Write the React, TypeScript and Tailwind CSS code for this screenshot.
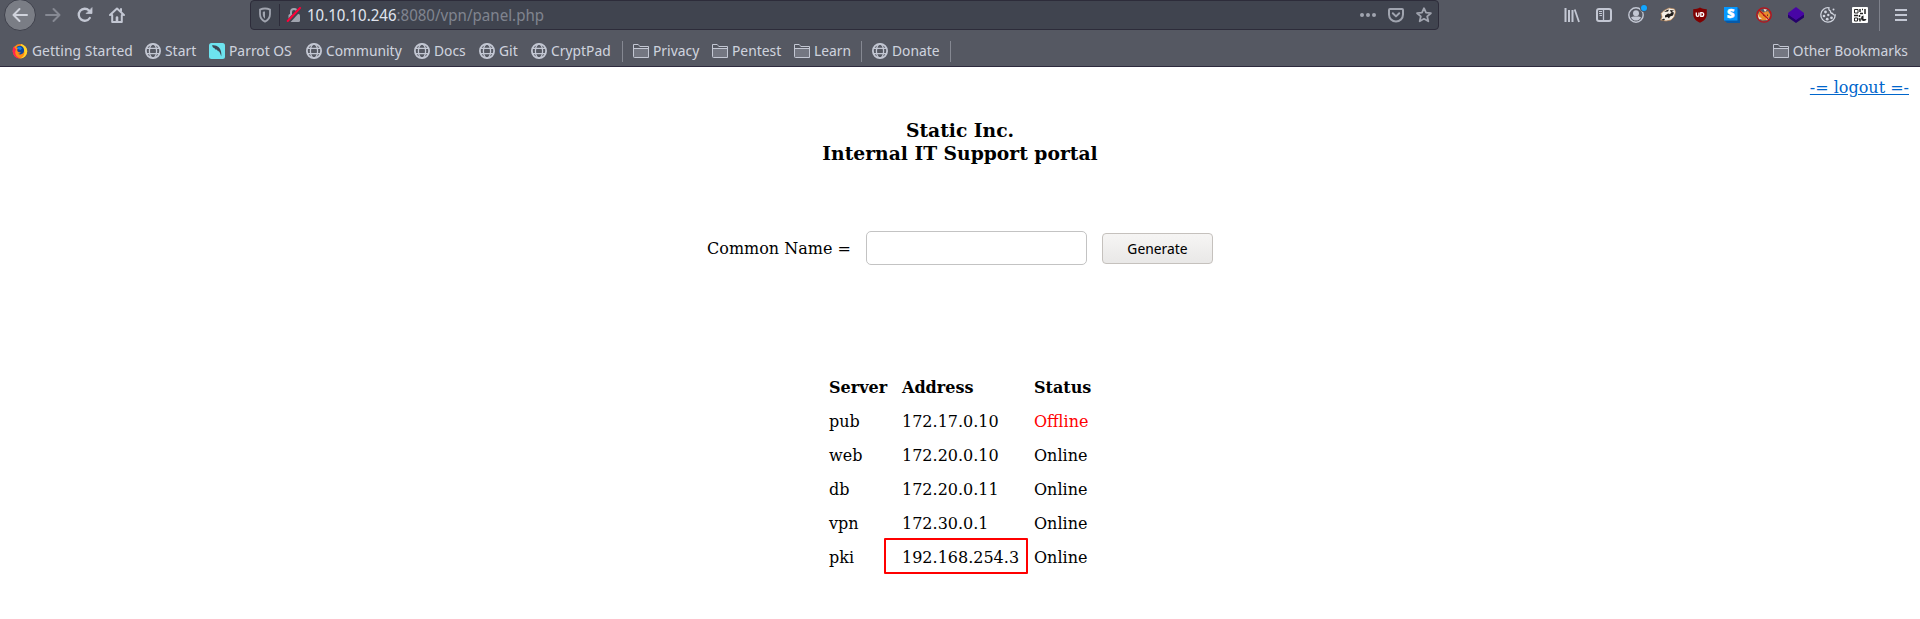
import React from "react";

const ui = "font-['Noto_Sans_Display','Noto_Sans',sans-serif]";

function Globe() {
  return (
    <svg width="16" height="16" viewBox="0 0 16 16" fill="none" stroke="#c3c7d3" className="shrink-0">
      <circle cx="8" cy="8" r="7.1" strokeWidth="1.8" />
      <ellipse cx="8" cy="8" rx="3.6" ry="7" strokeWidth="1.3" />
      <path d="M2 5.3h12M2 10.7h12" strokeWidth="1.3" />
    </svg>
  );
}

function Folder() {
  return (
    <svg width="16" height="16" viewBox="0 0 16 16" className="shrink-0">
      <path d="M.5 13.5v-12h4.7l1.6 2h8.7v11H1.5a1 1 0 0 1-1-1z" fill="#747782" stroke="#c3c7d3" />
      <path d="M1 2h4l1.5 2H15v1H1z" fill="#555862" />
      <path d="M1 5.5h14" stroke="#c3c7d3" />
    </svg>
  );
}

function Firefox() {
  return (
    <svg width="16" height="16" viewBox="0 0 16 16" className="shrink-0">
      <circle cx="8" cy="8.3" r="7.2" fill="#ff8a16" />
      <path d="M9 1c3 .8 6.3 3.5 6.2 7.5A7.2 7.2 0 0 1 8 15.5c2.8-1 4.7-3.2 4.5-6.2C12.300 6 8.500 4.500 9 1z" fill="#ffd52b" />
      <path d="M1.500 3.500C.3 6 .3 9.300 1.800 12c1.400 2.500 4 3.700 6.400 3.500-3-.8-5-3.200-5-6 0-1.500.5-2.400 1-3z" fill="#ff2453" />
      <path d="M4.500 4.500C5.500 2.700 8 2 10 3.300c2 1.300 2.700 4 1.700 6-1 2-3.700 2.800-5.700 1.500 1.500 0 2.700-.7 2.700-1.500-2 .2-3.500-.8-3.500-2.300 0-1 .8-1.500 1.800-1.300z" fill="#10479e" />
      <path d="M5 4.500c1.800-1.500 4-1 5 1L8.500 7 6 6z" fill="#1684e8" />
    </svg>
  );
}

function Parrot() {
  return (
    <svg width="16" height="16" viewBox="0 0 16 16" className="shrink-0">
      <rect width="16" height="16" rx="2.500" fill="#6de3ef" />
      <path d="M3 2.300c2.500-.5 5 .3 6.700 2 2.200 2.300 2.900 5 2.600 9.300-.6-2.500-1.500-4.600-3-6.200l.2 1.400C8.700 7.500 8 6.800 7 6.200l0 .8C6.200 5.800 5.300 5 4.300 4.600V5C3.800 4.200 3.400 3.300 3 2.300z" fill="#3d4654" />
    </svg>
  );
}

const icons = { globe: Globe, folder: Folder, firefox: Firefox, parrot: Parrot };

const bookmarks: { icon?: keyof typeof icons; label?: string; width: string }[] = [
  { icon: "firefox", label: "Getting Started", width: "w-[133px]" },
  { icon: "globe", label: "Start", width: "w-16" },
  { icon: "parrot", label: "Parrot OS", width: "w-[97px]" },
  { icon: "globe", label: "Community", width: "w-[108px]" },
  { icon: "globe", label: "Docs", width: "w-[65px]" },
  { icon: "globe", label: "Git", width: "w-[52px]" },
  { icon: "globe", label: "CryptPad", width: "w-[91px]" },
  { width: "w-[11px]" },
  { icon: "folder", label: "Privacy", width: "w-[79px]" },
  { icon: "folder", label: "Pentest", width: "w-[82px]" },
  { icon: "folder", label: "Learn", width: "w-[67px]" },
  { width: "w-[11px]" },
  { icon: "globe", label: "Donate", width: "w-[78px]" },
  { width: "w-[11px]" },
];

function Bookmark({ icon, label, width }: (typeof bookmarks)[number]) {
  if (!icon) {
    return (
      <div className={`${width} shrink-0`}>
        <div className="h-[21px] w-px bg-[#858892]" />
      </div>
    );
  }
  const Icon = icons[icon];
  return (
    <div className={`${width} flex shrink-0 items-center gap-1 whitespace-nowrap`}>
      <Icon />
      <span className={icon === "firefox" ? "pb-0.5 tracking-[0.08px]" : "pb-0.5"}>{label}</span>
    </div>
  );
}

function NavIcon({ children }: { children: React.ReactNode }) {
  return (
    <div className="flex w-8 shrink-0 items-center justify-center">
      <svg width="18" height="18" viewBox="-1 -1 18 18" fill="none" stroke="#c3c7d3" strokeWidth="2" strokeLinecap="round" strokeLinejoin="round">
        {children}
      </svg>
    </div>
  );
}

function NavButtons() {
  return (
    <div className="flex items-center pl-1">
      <div className="-my-px flex size-8 items-center justify-center rounded-full border border-[#3f414c] bg-[#7a7d85]">
        <svg width="18" height="18" viewBox="-1 -1 18 18" fill="none" stroke="#d0d3dc" strokeWidth="2" strokeLinecap="round" strokeLinejoin="round">
          <path d="M15 8H1.500M7.500 2l-6 6 6 6" />
        </svg>
      </div>
      <div className="ml-px flex">
        <NavIcon><path stroke="#868993" d="M1 8h13.500M8.500 2l6 6-6 6" /></NavIcon>
        <NavIcon>
          <path d="M12.800 11A6 6 0 1 1 12 3.500" strokeWidth="2.300" />
          <path d="M15 1v5.500H9.500z" fill="#c3c7d3" strokeWidth=".8" />
        </NavIcon>
        <NavIcon>
          <path d="M1 8l7-6.500L15 8M3.200 8v7h9.600V8M12 2v2" />
          <path d="M8 14v-3.500" strokeWidth="2.600" />
        </NavIcon>
      </div>
    </div>
  );
}

function AddressBar() {
  return (
    <div className="ml-[117px] flex h-[30px] w-[1189px] items-center rounded-[4px] border border-[#2d2c3a] bg-[#40444f]">
      <div className="flex w-7 justify-center">
        <svg width="16" height="16" viewBox="0 0 16 16" fill="none" stroke="#a0a4af">
          <path d="M8 1.500c2 0 3.500.4 5 1.100v4.300c0 3.600-2 6.200-5 7.700-3-1.500-5-4.100-5-7.700V2.600c1.500-.7 3-1.100 5-1.100z" strokeWidth="1.800" />
          <path d="M8 4.500c-.9 0-1.500.1-2.200.4v2.300c0 2 .7 3.400 2.200 4.500z" fill="#a0a4af" stroke="none" />
        </svg>
      </div>
      <div className="h-[22px] w-px bg-[#2d2c3a]" />
      <svg width="16" height="16" viewBox="0 0 16 16" fill="none" className="ml-[6px]">
        <path d="M5 7V5a3 3 0 0 1 6 0v2" stroke="#a0a4af" strokeWidth="2" />
        <rect x="2.500" y="7" width="11.500" height="8" rx="1.500" fill="#a0a4af" />
        <path d="M2.200 14.700L14.700 1.300" stroke="#40444f" strokeWidth="4" />
        <path d="M1.700 14L14 1" stroke="#ff0039" strokeWidth="2" strokeLinecap="round" />
      </svg>
      <span className="ml-[5px] text-base leading-[20px] text-[#dfe2ec]">
        10.10.10.246<span className="text-[#7f838e]">:8080/vpn/panel.php</span>
      </span>
      <div className="ml-auto flex items-center gap-3 pr-[6px]">
        <svg width="16" height="16" viewBox="0 0 16 16" fill="#a0a4af">
          <circle cx="2" cy="8" r="2" /><circle cx="8" cy="8" r="2" /><circle cx="14" cy="8" r="2" />
        </svg>
        <svg width="16" height="16" viewBox="0 0 16 16" fill="none" stroke="#a0a4af" strokeWidth="2" strokeLinecap="round" strokeLinejoin="round">
          <path d="M2 2h12a1 1 0 0 1 1 1v4.500a7 7 0 0 1-14 0V3a1 1 0 0 1 1-1z" />
          <path d="M4.800 6.300L8 9.400l3.200-3.100" />
        </svg>
        <svg width="16" height="16" viewBox="0 0 16 16" fill="none" stroke="#a0a4af" strokeWidth="1.800" strokeLinejoin="round">
          <path d="M8 1.200l2 4.500 4.900.5-3.700 3.200 1.100 4.900L8 11.800l-4.300 2.500 1.100-4.900L1.100 6.200 6 5.700z" />
        </svg>
      </div>
    </div>
  );
}

function Ext({ children }: { children: React.ReactNode }) {
  return (
    <div className="flex w-8 shrink-0 items-center justify-center">
      <svg width="16" height="16" viewBox="0 0 16 16" fill="none" className="overflow-visible">
        {children}
      </svg>
    </div>
  );
}

function Extensions() {
  return (
    <div className="ml-[117px] flex items-center">
      <Ext>
        <path d="M1.500 1v14M5 3v12M8.500 3v12" stroke="#c3c7d3" strokeWidth="2" />
        <path d="M10.700 2.500L15 15" stroke="#c3c7d3" strokeWidth="1.800" />
      </Ext>
      <Ext>
        <rect x="1" y="2" width="14" height="12" rx="2" stroke="#c3c7d3" strokeWidth="2" />
        <path d="M7.500 2v12" stroke="#c3c7d3" strokeWidth="1.300" />
        <path d="M3 4.500h3M3 6.500h3M3.500 8.500H6" stroke="#c3c7d3" />
      </Ext>
      <Ext>
        <circle cx="8" cy="8" r="7.200" stroke="#c3c7d3" strokeWidth="1.400" />
        <circle cx="8" cy="6.300" r="3" fill="#c3c7d3" />
        <path d="M3 10.500c.8-.7 2-.9 3-.9h4c1 0 2.200.2 3 .9A5.700 5.700 0 0 1 8 13.600a5.700 5.700 0 0 1-5-3.100z" fill="#c3c7d3" />
        <circle cx="16" cy="1" r="4" fill="#4d5664" />
        <circle cx="16" cy="1" r="3" fill="#12a6ff" />
      </Ext>
      <Ext>
        <path d="M1 6.500l3-3L9 1l5.500 1L15.500 5l-1.500 5-3 3-5 1-5.500-1L2 10z" fill="#f5eee5" stroke="#ba824f" strokeWidth=".7" />
        <path d="M4 5l3-2 2-.5-1 2zM10 3l4 .5-3 2zM1 13l3-1.500 1 1L3.500 13.500zM5 8.500l3-2 2 .5 2-2 2 .5-1 3-3 1-1 2-1.500-1.500-2.500.5z" fill="#211d1b" />
      </Ext>
      <Ext>
        <path d="M8 .5c2 1.200 4 1.600 6.800 1.700V7c0 4.500-3 7-6.800 8.800C4.200 14 1.200 11.500 1.200 7V2.200C4 2.100 6 1.700 8 .5z" fill="#800000" />
        <path d="M4.300 5.500V8a1.300 1.300 0 0 0 2.700 0V5.500" stroke="#fff" strokeWidth="1.300" />
        <path d="M8.800 5.600h1a1.900 1.900 0 0 1 0 3.800h-1z" stroke="#fff" strokeWidth="1.300" />
      </Ext>
      <Ext>
        <path d="M0 0h13.500L16 3v13H3L0 13z" fill="#075aa9" />
        <rect width="13.500" height="13.500" fill="#0798ff" />
        <text x="6.800" y="11.300" textAnchor="middle" fontFamily="Noto Sans" fontSize="13" fontWeight="900" fill="#fff" stroke="#fff" strokeWidth=".5">S</text>
      </Ext>
      <Ext>
        <path d="M2 7.500l2-4 3.500 2L12 4l2.500 4-2.500 5-6 .5-3.500-2.500z" fill="#e98b2d" />
        <path d="M1.500 6.500l2 3.500L6 11.500l-3 1zM7.500 2l3.500.5-2 2.500zM10 11h3l-2 2.500z" fill="#f6ded0" />
        <path d="M7 8l2 1M11.500 7.500V9" stroke="#66351b" />
        <circle cx="8" cy="8" r="7.200" stroke="#bd1118" strokeWidth="1.300" />
        <path d="M3 3l10 10" stroke="#bd1118" strokeWidth="1.300" />
      </Ext>
      <Ext>
        <path d="M0 7l8 5.500L16 7v3.500L8 16 0 10.500z" fill="#25006b" />
        <path d="M8 0l8 6v1.500L8 13 0 7.500V6z" fill="#4805a5" />
      </Ext>
      <Ext>
        <path d="M9 .8A7.200 7.200 0 1 0 15.200 8c-1.500.2-2.300-.4-2.500-1.500C11 6.300 10.300 5.500 10.500 4 9 3.500 8.500 2.300 9 .8z" stroke="#d0d4de" strokeWidth="1.300" />
        <g fill="#d0d4de"><circle cx="5.500" cy="5" r="1.400" /><circle cx="4" cy="9" r="1.300" /><circle cx="8.300" cy="8" r="1.200" /><circle cx="7.200" cy="12.200" r="1.400" /><circle cx="11.500" cy="10.800" r="1.400" /><circle cx="13.500" cy="2.500" r="1" /></g>
      </Ext>
      <Ext>
        <rect width="16" height="16" rx="1" fill="#fff" />
        <path d="M2.500 2.500h3.500v3.500h-3.500zM2.500 11h3v3h-3z" stroke="#252525" />
        <path d="M8 2v3M8 6.500h3M10 2.500h1M13 2v5M2 8.500h4M7.500 8v2M6.500 12h1.500v2.500" stroke="#252525" strokeWidth="1.500" />
        <path d="M11.500 8.500a2.800 2.800 0 1 0 3 3.500h-3z" fill="#252525" />
      </Ext>
      <div className="ml-[3px] h-8 w-px bg-[#7e818b]" />
      <svg width="16" height="16" viewBox="0 0 16 16" stroke="#c3c7d3" strokeWidth="2" className="ml-[13px]">
        <path d="M2 3h12M2 8h12M2 13h12" />
      </svg>
    </div>
  );
}

const servers = [
  ["pub", "172.17.0.10", "Offline"],
  ["web", "172.20.0.10", "Online"],
  ["db", "172.20.0.11", "Online"],
  ["vpn", "172.30.0.1", "Online"],
  ["pki", "192.168.254.3", "Online"],
];

export default function App() {
  return (
    <div className="h-[619px] w-[1920px] overflow-hidden bg-white font-['DejaVu_Serif',serif] text-base text-black">
      <header className={`${ui} h-[67px] border-b border-[#2d2a3d] bg-[#555862]`}>
        <div className="flex h-[30px] items-center">
          <NavButtons />
          <AddressBar />
          <Extensions />
        </div>
        <nav className="flex h-[36px] items-center pt-[6px] pr-3 pl-3 text-[14.667px] leading-[18px] text-[#ced2dd]">
          {bookmarks.map((b, i) => (
            <Bookmark key={i} {...b} />
          ))}
          <div className="ml-auto flex items-center gap-1">
            <Folder />
            <span className="pb-0.5">Other Bookmarks</span>
          </div>
        </nav>
      </header>
      <main className="flex flex-col items-center">
        <div className="flex h-[52px] w-full justify-end pt-[11px] pr-[11px] leading-[19px]">
          <a href="#" className="text-[#0066cc] underline">-= logout =-</a>
        </div>
        <h3 className="text-center text-[18.72px] leading-[23px] font-bold">
          Static Inc.
          <br />
          Internal IT Support portal
        </h3>
        <form className="mt-[66px] flex h-[34px] w-[506px] items-center">
          <label className="w-[159px] pt-0.5" htmlFor="cn">Common Name =</label>
          <input id="cn" className="h-[34px] w-[221px] rounded-[5px] border border-[#c3c3c3] bg-white" />
          <button type="button" className={`${ui} ml-[15px] h-[31px] w-[111px] rounded-[4px] border border-[#c5c1bd] bg-linear-to-b from-[#f6f5f4] to-[#e9e8e7] text-[14.667px]`}>
            Generate
          </button>
        </form>
        <table className="mt-[106px] ml-0.5 w-[264px] table-fixed border-collapse text-left">
          <thead>
            <tr className="h-[34px]">
              <th className="w-[73px] p-0">Server</th>
              <th className="w-[132px] p-0">Address</th>
              <th className="p-0">Status</th>
            </tr>
          </thead>
          <tbody>
            {servers.map(([name, address, status]) => (
              <tr key={name} className="h-[34px]">
                <td className="p-0">{name}</td>
                <td className="relative p-0">
                  {address}
                  {name === "pki" && <div className="absolute top-[-3px] left-[-18px] h-9 w-36 rounded-[1px] border-2 border-[#f00]" />}
                </td>
                <td className={status === "Offline" ? "p-0 text-[#f00]" : "p-0"}>{status}</td>
              </tr>
            ))}
          </tbody>
        </table>
      </main>
    </div>
  );
}
